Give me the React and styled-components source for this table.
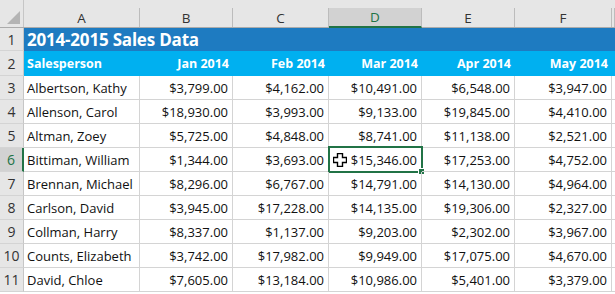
import React from "react";
import styled, { createGlobalStyle, css } from "styled-components";

const COLS = "24px 116px 93px 96px 93px 93px 97px 1fr";
const GREEN = "#217346";

const rows = [
  ["Albertson, Kathy", "$3,799.00", "$4,162.00", "$10,491.00", "$6,548.00", "$3,947.00"],
  ["Allenson, Carol", "$18,930.00", "$3,993.00", "$9,133.00", "$19,845.00", "$4,410.00"],
  ["Altman, Zoey", "$5,725.00", "$4,848.00", "$8,741.00", "$11,138.00", "$2,521.00"],
  ["Bittiman, William", "$1,344.00", "$3,693.00", "$15,346.00", "$17,253.00", "$4,752.00"],
  ["Brennan, Michael", "$8,296.00", "$6,767.00", "$14,791.00", "$14,130.00", "$4,964.00"],
  ["Carlson, David", "$3,945.00", "$17,228.00", "$14,135.00", "$19,306.00", "$2,327.00"],
  ["Collman, Harry", "$8,337.00", "$1,137.00", "$9,203.00", "$2,302.00", "$3,967.00"],
  ["Counts, Elizabeth", "$3,742.00", "$17,982.00", "$9,949.00", "$17,075.00", "$4,670.00"],
  ["David, Chloe", "$7,605.00", "$13,184.00", "$10,986.00", "$5,401.00", "$3,379.00"],
];

const months = ["Jan 2014", "Feb 2014", "Mar 2014", "Apr 2014", "May 2014"];

function App() {
  return (
    <>
      <GlobalStyle />
      <Sheet>
        <HeaderBar>
          <Corner>
            <svg width="13" height="13" viewBox="0 0 13 13">
              <polygon points="13,0 13,13 0,13" fill="#b4b4b4" />
            </svg>
          </Corner>
          {["A", "B", "C", "D", "E", "F", ""].map((l) => (
            <ColHead key={l || "g"} $selected={l === "D"}>
              {l}
            </ColHead>
          ))}
        </HeaderBar>

        <Row $h={23}>
          <RowHead>1</RowHead>
          <TitleCell>2014-2015 Sales Data</TitleCell>
        </Row>

        <Row $h={25}>
          <RowHead>2</RowHead>
          <LabelCell>Salesperson</LabelCell>
          {months.map((m) => (
            <LabelCell key={m} $right>
              {m}
            </LabelCell>
          ))}
          <LabelCell />
        </Row>

        {rows.map((r, i) => {
          const n = i + 3;
          return (
            <Row key={n} $h={24}>
              <RowHead $selected={n === 6}>{n}</RowHead>
              {r.map((v, j) => (
                <Cell key={j} $right={j > 0}>
                  {n === 6 && j === 3 && (
                    <>
                      <Selection>
                        <Handle />
                      </Selection>
                      <Cursor width="14" height="14" viewBox="0 0 14 14">
                        <polygon
                          points="4.5,0.5 9.5,0.5 9.5,4.5 13.5,4.5 13.5,9.5 9.5,9.5 9.5,13.5 4.5,13.5 4.5,9.5 0.5,9.5 0.5,4.5 4.5,4.5"
                          fill="#fff"
                          stroke="#000"
                          strokeWidth="1.4"
                        />
                      </Cursor>
                    </>
                  )}
                  {v}
                </Cell>
              ))}
              <Cell />
            </Row>
          );
        })}
      </Sheet>
    </>
  );
}

export default App;

const GlobalStyle = createGlobalStyle`
  body {
    margin: 0;
    background: #fff;
    font-family: "Open Sans", "Liberation Sans", sans-serif;
  }
`;

const Sheet = styled.div`
  width: 615px;
  height: 294px;
  overflow: hidden;
  background: #fff;
`;

const HeaderBar = styled.div`
  display: grid;
  grid-template-columns: ${COLS};
  height: 28px;
  box-sizing: border-box;
  padding-top: 8px;
  background: #e6e6e6;
  border-bottom: 1px solid #ababab;
`;

const Corner = styled.div`
  display: flex;
  align-items: flex-end;
  justify-content: flex-end;
  padding: 0 3px 3px 0;
  margin-top: -8px;
  border-right: 1px solid #c6c6c6;
`;

const ColHead = styled.div`
  display: flex;
  align-items: center;
  justify-content: center;
  font-size: 13.5px;
  color: #333;
  border-right: 1px solid #bcbcbc;
  box-sizing: border-box;
  ${(p) =>
    p.$selected &&
    css`
      background: #d2d2d2;
      color: ${GREEN};
      border-bottom: 2px solid ${GREEN};
      margin-bottom: -1px;
    `}
`;

const Row = styled.div`
  display: grid;
  grid-template-columns: ${COLS};
  height: ${(p) => p.$h}px;
`;

const RowHead = styled.div`
  display: flex;
  align-items: center;
  justify-content: center;
  font-size: 14px;
  color: #333;
  background: #e6e6e6;
  border-right: 1px solid #c6c6c6;
  border-bottom: 1px solid #d4d4d4;
  box-sizing: border-box;
  ${(p) =>
    p.$selected &&
    css`
      background: #d2d2d2;
      color: ${GREEN};
      border-right: 2px solid ${GREEN};
    `}
`;

const TitleCell = styled.div`
  grid-column: 2 / -1;
  display: flex;
  align-items: center;
  padding-left: 3px;
  background: #1e7bc1;
  color: #fff;
  font-size: 17px;
  font-weight: 700;
  letter-spacing: -0.2px;
  white-space: nowrap;
`;

const LabelCell = styled.div`
  display: flex;
  align-items: center;
  justify-content: ${(p) => (p.$right ? "flex-end" : "flex-start")};
  padding: 0 4px 0 3px;
  background: #00b0f0;
  color: #fff;
  font-size: 12.5px;
  font-weight: 700;
  white-space: nowrap;
`;

const Cell = styled.div`
  position: relative;
  display: flex;
  align-items: center;
  justify-content: ${(p) => (p.$right ? "flex-end" : "flex-start")};
  padding: 0 4px 0 3px;
  font-size: 13px;
  color: #111;
  border-right: 1px solid #d4d4d4;
  border-bottom: 1px solid #d4d4d4;
  box-sizing: border-box;
  white-space: nowrap;
`;

const Selection = styled.div`
  position: absolute;
  top: -2px;
  left: -1px;
  right: -2px;
  bottom: -2px;
  border: 2px solid ${GREEN};
`;

const Handle = styled.div`
  position: absolute;
  right: -4px;
  bottom: -4px;
  width: 5px;
  height: 5px;
  background: ${GREEN};
  border: 1px solid #fff;
`;

const Cursor = styled.svg`
  position: absolute;
  left: 4px;
  top: 5px;
`;
